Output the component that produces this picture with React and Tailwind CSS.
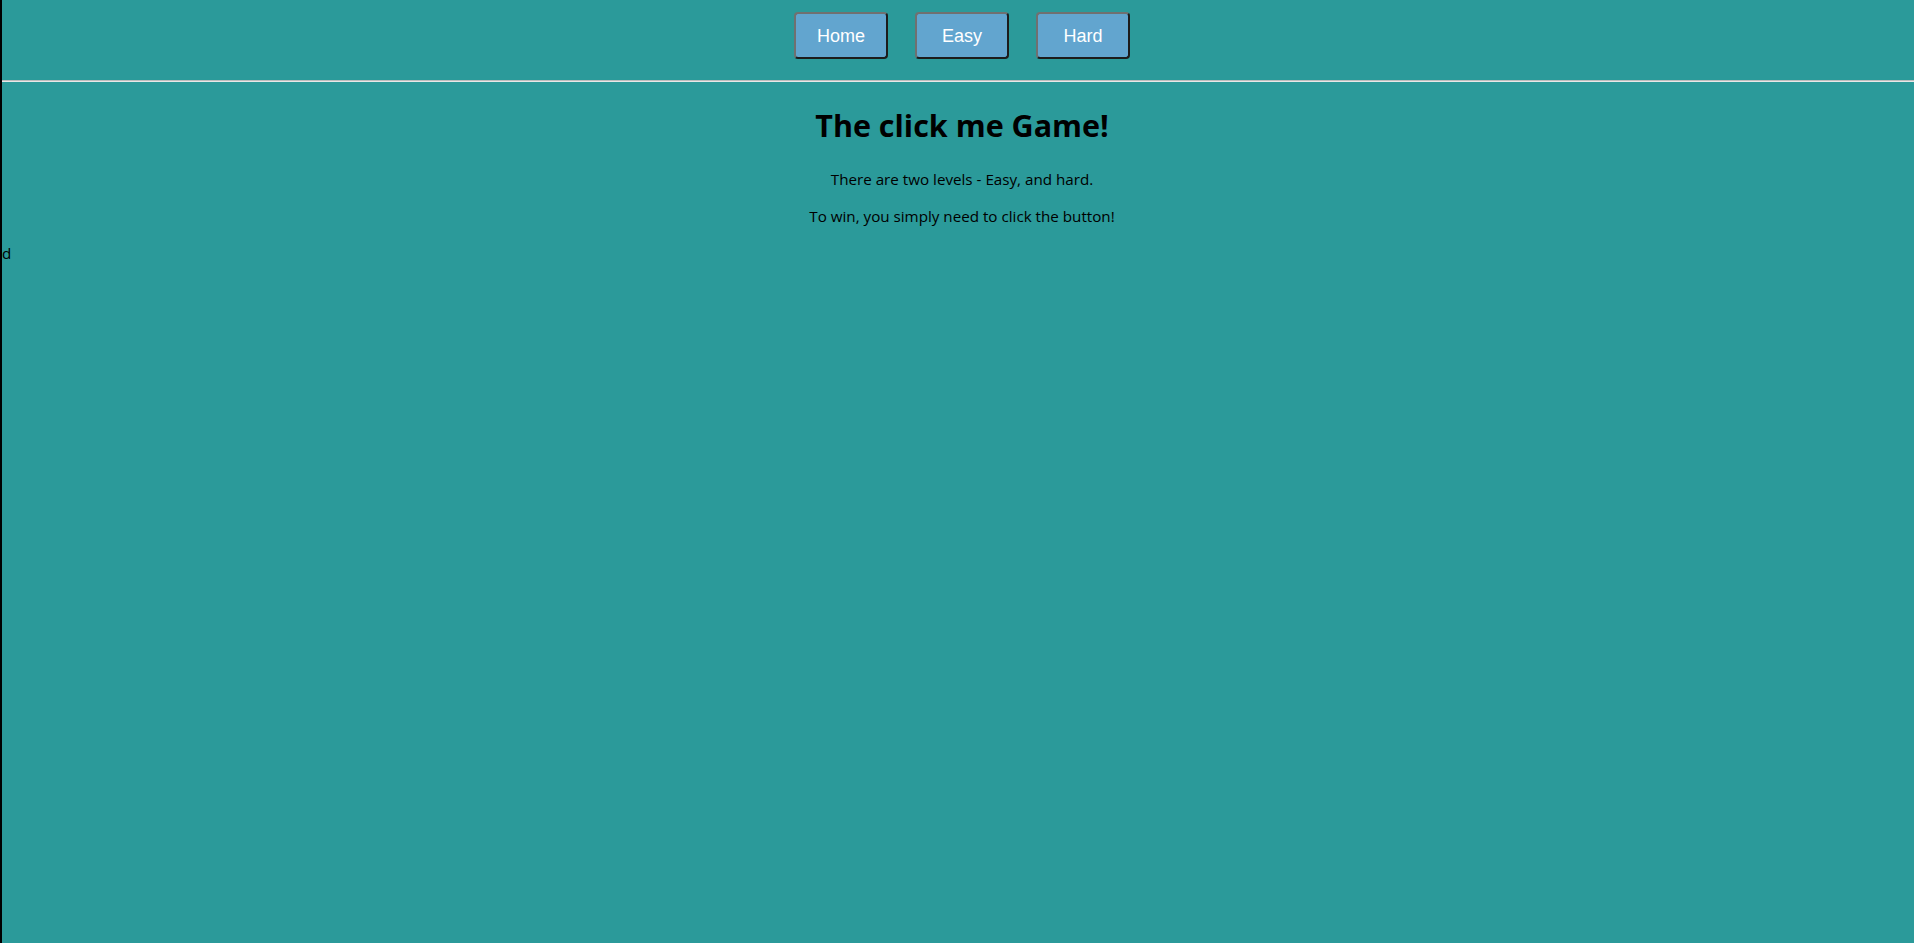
export default function App() {
  const btn =
    "w-[94px] h-[47px] rounded-[4px] border-2 border-t-[#707070] border-l-[#707070] border-b-[#1c1c1c] border-r-[#1c1c1c] bg-[#62a5cf] text-white text-[18px] leading-none";
  return (
    <div
      className="min-h-screen bg-[#2b9a9a] border-l-2 border-black text-black"
      style={{ fontFamily: '"Open Sans", "Noto Sans", sans-serif' }}
    >
      <nav
        className="flex justify-center gap-[27px] pl-2 pt-[12px] pb-[21px]"
        style={{ fontFamily: '"Liberation Sans", Arial, sans-serif' }}
      >
        <button className={btn}>Home</button>
        <button className={btn}>Easy</button>
        <button className={btn}>Hard</button>
      </nav>
      <div className="h-[2px] border-t border-t-[#bdbdbd] border-b border-b-[#e8e8e8]" />
      <div className="text-center pl-2">
        <h1 className="text-[30.5px] font-bold leading-none pt-[28px]">The click me Game!</h1>
        <p className="text-[15.2px] leading-none pt-[31px]">There are two levels - Easy, and hard.</p>
        <p className="text-[15.2px] leading-none pt-[22px]">To win, you simply need to click the button!</p>
      </div>
      <div className="text-[15.2px] leading-none pt-[22px]">d</div>
    </div>
  );
}
